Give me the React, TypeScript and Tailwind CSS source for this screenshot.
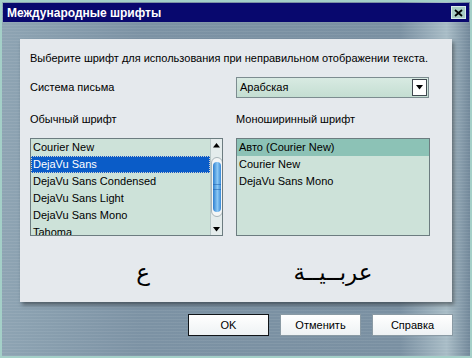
import React from "react";

const leftFonts = [
    "Courier New",
    "DejaVu Sans",
    "DejaVu Sans Condensed",
    "DejaVu Sans Light",
    "DejaVu Sans Mono",
    "Tahoma",
];

const monoFonts = ["Авто (Courier New)", "Courier New", "DejaVu Sans Mono"];

function Arrow({ down }: { down?: boolean }) {
    return (
        <svg width="7" height="5" viewBox="0 0 7 5">
            <path
                d={down ? "M0 0 L7 0 L3.5 4.5 Z" : "M0 4.5 L7 4.5 L3.5 0 Z"}
                fill="#000"
            />
        </svg>
    );
}

function ScrollBar() {
    return (
        <div className="w-[12px] h-full flex flex-col items-center bg-[#e4ecec] border-l border-[#b8c8c8]">
            <div className="h-[12px] flex items-center justify-center">
                <Arrow />
            </div>
            <div className="mt-[6px] w-[12px] h-[60px] rounded-full bg-[#f4f6f6] border border-[#a8b4b8] flex items-center justify-center">
                <div className="w-[8px] h-[50px] rounded-full bg-[linear-gradient(90deg,#2c7ed0,#8cc8f4_55%,#3a8ad8)] flex items-center justify-center">
                    <div className="w-[8px] h-[6px] border-y border-[#1c5ca8] opacity-50" />
                </div>
            </div>
            <div className="flex-1" />
            <div className="h-[12px] flex items-center justify-center">
                <Arrow down />
            </div>
        </div>
    );
}

export default function App() {
    return (
        <div
            className="w-[472px] h-[358px] border-2 border-[#a4d0c8] flex flex-col overflow-hidden bg-[repeating-linear-gradient(0deg,rgba(255,255,255,0.07)_0px,rgba(255,255,255,0.07)_1px,transparent_1px,transparent_3px),linear-gradient(90deg,#8ea4b3,#7c92a4_30%,#7a90a2_85%,#a8bcc6_95%,#72889a)]"
            style={{ fontFamily: '"Liberation Sans", Arial, sans-serif' }}
        >
            {/* title bar */}
            <div className="mx-[1px] mt-[1px] h-[19px] bg-[#08086e] flex items-center justify-between pl-[4px] pr-[3px]">
                <span className="text-white font-bold text-[12px] leading-none">
                    Международные шрифты
                </span>
                <div className="w-[15px] h-[13px] bg-[#a8ccc4] border border-[#d8ece8] flex items-center justify-center">
                    <svg width="9" height="8" viewBox="0 0 9 8">
                        <path
                            d="M1 1 L8 7 M8 1 L1 7"
                            stroke="#000"
                            strokeWidth="1.8"
                        />
                    </svg>
                </div>
            </div>

            {/* panel */}
            <div className="ml-[18px] mr-[18px] mt-[17px] h-[263px] bg-[#e5e9ed] shadow-[2px_3px_4px_rgba(0,0,0,0.4)] px-[10px] pt-[12px] text-[11px] text-black">
                <div className="leading-[14px]">
                    Выберите шрифт для использования при неправильном
                    отображении текста.
                </div>

                <div className="mt-[12px] flex items-center h-[21px]">
                    <div className="w-[206px]">Система письма</div>
                    <div className="w-[193px] h-[21px] border border-[#7c8c90] bg-[linear-gradient(180deg,#d8eae2,#c4ded2)] flex items-center">
                        <span className="flex-1 pl-[3px]">Арабская</span>
                        <div className="w-[15px] h-[17px] mr-[1px] bg-white border border-[#404850] flex items-center justify-center">
                            <Arrow down />
                        </div>
                    </div>
                </div>

                <div className="mt-[14px] flex leading-[14px]">
                    <div className="w-[206px]">Обычный шрифт</div>
                    <div>Моноширинный шрифт</div>
                </div>

                <div className="mt-[12px] flex">
                    <div className="w-[193px] h-[98px] border border-[#6c7c80] bg-[#cde2d9] flex overflow-hidden">
                        <div className="flex-1 flex flex-col">
                            {leftFonts.map((f, i) => (
                                <div
                                    key={f}
                                    className={
                                        i === 1
                                            ? "h-[17px] shrink-0 flex items-center pl-[2px] bg-[#0a5cc8] text-white outline-1 outline-dotted outline-[#d0d0d0] -outline-offset-1"
                                            : "h-[17px] shrink-0 flex items-center pl-[2px]"
                                    }
                                >
                                    {f}
                                </div>
                            ))}
                        </div>
                        <ScrollBar />
                    </div>
                    <div className="ml-[13px] w-[194px] h-[98px] border border-[#6c7c80] bg-[#cde2d9] flex flex-col">
                        {monoFonts.map((f, i) => (
                            <div
                                key={f}
                                className={
                                    i === 0
                                        ? "h-[17px] flex items-center pl-[2px] bg-[#8cc2b6]"
                                        : "h-[17px] flex items-center pl-[2px]"
                                }
                            >
                                {f}
                            </div>
                        ))}
                    </div>
                </div>

                <div
                    className="mt-[20px] flex items-center h-[32px] text-[23px] text-black"
                    style={{ fontFamily: '"DejaVu Sans", sans-serif' }}
                >
                    <div className="w-[206px] flex justify-center pl-[20px]">
                        ع
                    </div>
                    <div className="w-[194px] flex justify-center">
                        عربــيــة
                    </div>
                </div>
            </div>

            {/* buttons */}
            <div className="mt-[12px] mr-[17px] flex justify-end gap-[11px] text-[11px]">
                <button className="w-[81px] h-[22px] bg-[linear-gradient(180deg,#ffffff,#eef2f4)] border border-[#101418] text-black">
                    OK
                </button>
                <button className="w-[81px] h-[22px] bg-[linear-gradient(180deg,#ffffff,#eef2f4)] border border-[#8a9aa4] text-black">
                    Отменить
                </button>
                <button className="w-[81px] h-[22px] bg-[linear-gradient(180deg,#ffffff,#eef2f4)] border border-[#8a9aa4] text-black">
                    Справка
                </button>
            </div>
        </div>
    );
}
